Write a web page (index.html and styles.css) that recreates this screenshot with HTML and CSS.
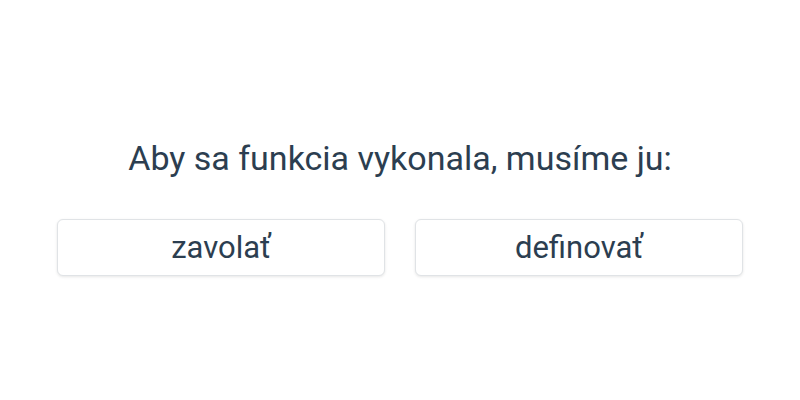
FILE: index.html
```html
<!DOCTYPE html>
<html lang="sk">
<head>
<meta charset="utf-8">
<link rel="stylesheet" href="styles.css">
</head>
<body>
<main class="quiz">
  <h1 class="question">Aby sa funkcia vykonala, musíme ju:</h1>
  <div class="options">
    <button class="option">zavolať</button>
    <button class="option">definovať</button>
  </div>
</main>
</body>
</html>
```
FILE: styles.css
```css
html, body {
  margin: 0;
  padding: 0;
  background: #ffffff;
}
body {
  width: 800px;
  height: 400px;
  font-family: Roboto, "Liberation Sans", sans-serif;
  color: #2c3e50;
}
.quiz {
  height: 400px;
  box-sizing: border-box;
  padding: 138px 57px 0;
  display: flex;
  flex-direction: column;
}
.question {
  margin: 0 0 41px;
  font-size: 34px;
  font-weight: 400;
  text-align: center;
  line-height: 40px;
}
.options {
  display: grid;
  grid-template-columns: 1fr 1fr;
  gap: 30px;
}
.option {
  height: 57px;
  background: #ffffff;
  border: 1px solid #e0e3e6;
  border-radius: 6px;
  box-shadow: 0 1px 3px rgba(0,0,0,0.1);
  font-family: Roboto, "Liberation Sans", sans-serif;
  font-size: 31px;
  color: #2c3e50;
  padding: 0;
}
```
